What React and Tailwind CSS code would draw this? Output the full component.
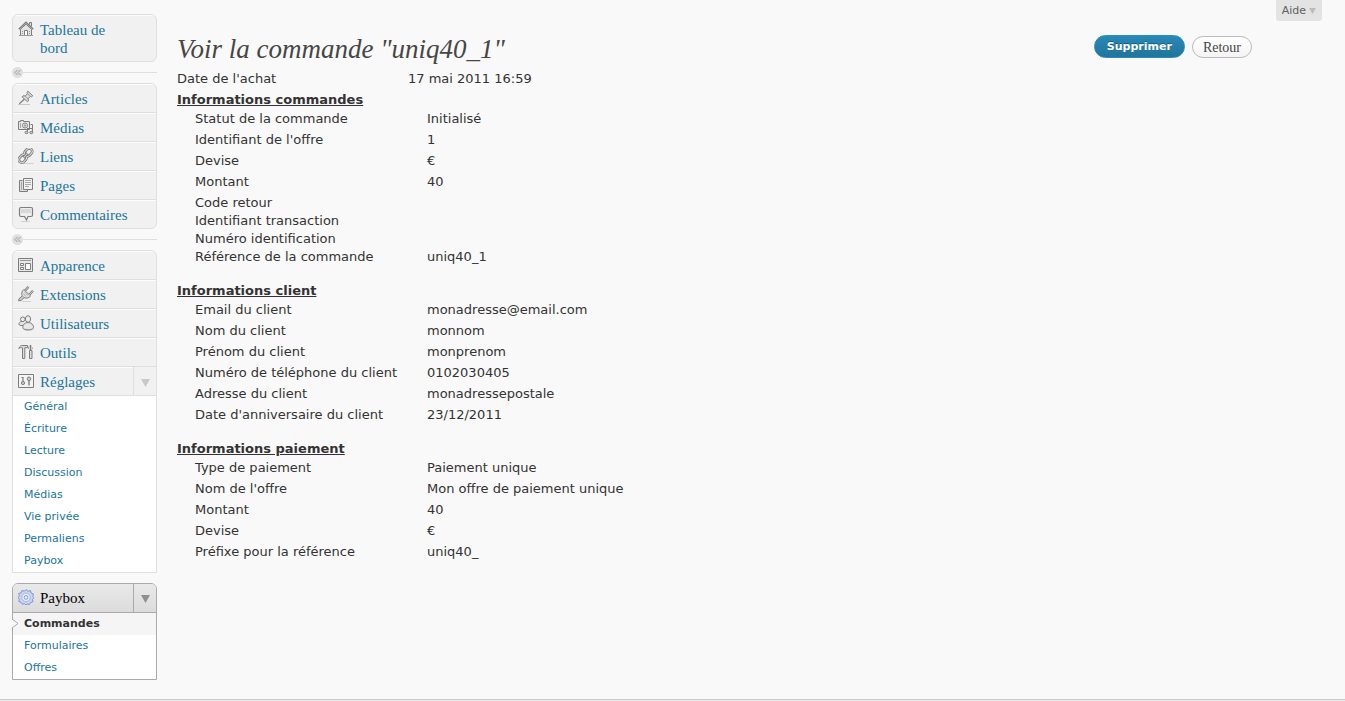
import React from "react";

const serif = "font-['Liberation_Serif',serif]";

function Icon({ children, tone = "text-[#7d7d7d]" }) {
  return (
    <svg
      viewBox="0 0 16 16"
      className={`size-4 shrink-0 ${tone}`}
      fill="none"
      stroke="currentColor"
      strokeWidth="1"
      aria-hidden="true"
    >
      {children}
    </svg>
  );
}

const icons = {
  home: (
    <Icon>
      <path d="M11.5 3.5v-2h2v4" fill="#ddd" />
      <path d="M2.5 8.2v6.3h11V8.2L8 3.2z" fill="#e4e4e4" />
      <path d="M.7 8.3 8 1.2l7.3 7.1" strokeWidth="1.4" />
      <path d="M6.5 14.5v-5h3v5" fill="#fff" />
      <path d="M4 10.5h1M11 10.5h1M4 12.5h1M11 12.5h1M1 14.5h14" stroke="#999" />
    </Icon>
  ),
  pin: (
    <Icon>
      <path d="M9.8 1.2 14.8 5.8l-1.2 1-1.2-.4-2.2 2.2.3 2.2-1.1.9L4 6.800l1-1 2.300.200 2.200-2.300-.5-1.300z" fill="#ddd" />
      <path d="M6.300 9.300 1.300 13.800" strokeWidth="1.200" />
      <path d="M7.200 6.200 10 8.800M9.800 4l2.500 2.300" stroke="#999" />
      <path d="M0 14.500h12" stroke="#c8c8c8" />
    </Icon>
  ),
  media: (
    <Icon>
      <path d="M.5 2.500h2v-1h3v1h6v8H.5z" fill="#e8e8e8" />
      <circle cx="7" cy="6.500" r="2.500" fill="#fff" />
      <circle cx="7" cy="6.500" r=".8" />
      <path d="M2.500 4v5" stroke="#aaa" />
      <path d="M9.500 13.500V9M14.500 13.500V5.500h-2M9.500 9.500h5" />
      <ellipse cx="8.500" cy="13.500" rx="1.500" ry="1.200" fill="#ccc" />
      <ellipse cx="13.300" cy="13.500" rx="1.500" ry="1.200" fill="#ccc" />
    </Icon>
  ),
  link: (
    <Icon>
      <g transform="rotate(-48 7.500 7.500)">
        <rect x="7.500" y="4.500" width="8.500" height="6" rx="3" strokeWidth="2.800" />
        <rect x="-1" y="4.500" width="8.500" height="6" rx="3" strokeWidth="2.800" />
        <rect x="7.500" y="4.500" width="8.500" height="6" rx="3" stroke="#dcdcdc" />
        <rect x="-1" y="4.500" width="8.500" height="6" rx="3" stroke="#dcdcdc" />
        <path d="M4.500 7.500h6" strokeWidth="2.800" />
        <path d="M4.500 7.500h6" stroke="#dcdcdc" />
      </g>
      <path d="M6 15.500h10" stroke="#d2d2d2" />
    </Icon>
  ),
  pages: (
    <Icon>
      <path d="M4.500 3.500h-3v11h8v-2" fill="#ddd" />
      <path d="M5.500 1.500h9v11h-9z" fill="#f2f2f2" />
      <path d="M7 3.500h6M7 5.500h6M7 7.500h6M7 9.500h4" stroke="#aaa" />
      <path d="M3.500 5v8" stroke="#aaa" />
    </Icon>
  ),
  comment: (
    <Icon>
      <path d="M3 1.500h10q1.500 0 1.500 1.500v6q0 1.500-1.500 1.500h-3L8.500 14 6.500 10.500H3Q1.500 10.500 1.500 9V3q0-1.500 1.500-1.500z" fill="#eee" strokeWidth="1.200" />
      <path d="M3 3h10v4H3z" fill="#d8d8d8" stroke="none" />
      <path d="M3 15.500h9" stroke="#d2d2d2" />
    </Icon>
  ),
  theme: (
    <Icon>
      <path d="M.5 1.500h14v13H.5z" fill="#e8e8e8" />
      <path d="M2 3.500h11" stroke="#999" />
      <path d="M2.500 6.500h3v2h-3zM2.500 10.500h3v2h-3zM7.500 6.500h5v6h-5z" fill="#fff" />
    </Icon>
  ),
  plug: (
    <Icon>
      <path d="M5.800 3.500 12.500 10c-1.700 2.200-4.500 2.700-6.700 1.500L4.300 10C3.200 7.800 3.700 5.200 5.800 3.500z" fill="#e2e2e2" />
      <path d="M10.500.8 7 4.800M15 4.800l-3.500 3.700" strokeWidth="2.400" />
      <path d="M10.500.8 7 4.800M15 4.800l-3.500 3.700" stroke="#e4e4e4" strokeWidth=".8" />
      <path d="M6.500 6.200 9.800 9.400M5.500 8l2.800 2.700" stroke="#aaa" />
      <path d="M4 10.200 1 12.800l-.5 2 2.500-.3 3-2.700" fill="#ccc" />
      <path d="M4 15.500h9" stroke="#d2d2d2" />
    </Icon>
  ),
  users: (
    <Icon>
      <path d="M5.500 10.500H3C0 10.500.5 7.500 3 6.500h3" fill="#e4e4e4" />
      <circle cx="4.800" cy="4.300" r="2.300" fill="#eee" />
      <path d="M10 7.500c-3.500 0-5.200 2.500-5.200 4.700s2 2.800 5.400 2.800 5.300-.6 5.300-2.800S13.500 7.500 10 7.500z" fill="#e8e8e8" />
      <ellipse cx="10" cy="4" rx="2.600" ry="3.300" fill="#eee" />
      <path d="M6.500 14c2 .8 5.500.8 7.500 0" stroke="#999" />
    </Icon>
  ),
  tools: (
    <Icon>
      <path d="M.8 4.500C1.500 2 3 1.500 5 1.500h4.500v2.200H6.800v10.800H4.500V3.800C3 3.500 2 3.500.8 4.500z" fill="#ddd" />
      <path d="M12.500 1v5" strokeWidth="1.600" />
      <path d="M11.500 6.500H14v8h-2.500z" fill="#ddd" />
      <path d="M10.500 5V2.500M14.500 5V3.500" stroke="#aaa" />
    </Icon>
  ),
  settings: (
    <Icon>
      <path d="M.5 1.500h15v13H.5z" fill="#f4f4f4" />
      <path d="M5 4v4M3.500 4.500h1" strokeWidth="1.200" />
      <circle cx="5" cy="10" r="1.600" fill="#ccc" />
      <circle cx="11" cy="5.800" r="1.800" fill="#ccc" />
      <path d="M11 8v4.500" strokeWidth="1.400" />
    </Icon>
  ),
  gear: (
    <Icon tone="text-[#7f96cc]">
      <path
        d="M8 .5 10 2.300l2.500-.8.7 2.600 2.300.900-.8 2.400L16 8.500l-1.500 1.900.5 2.300-2.500.8-1 2-2.300-.6L8 16l-1.500-1.400-2.200.7-1.100-2-2.300-.7.4-2.300L.3 8.500l1.100-1.700L.7 4.500l2.400-.700L4 1.500l2.400.7z"
        fill="#cbd6ef"
      />
      <circle cx="8" cy="8.400" r="4.300" fill="#e3eafa" stroke="#a6b8e2" />
      <circle cx="8" cy="8.400" r="1.800" fill="#f3f6fd" stroke="#8097cf" />
    </Icon>
  ),
};

const content = [["pin", "Articles"], ["media", "Médias"], ["link", "Liens"], ["pages", "Pages"], ["comment", "Commentaires"]];
const admin = [["theme", "Apparence"], ["plug", "Extensions"], ["users", "Utilisateurs"], ["tools", "Outils"], ["settings", "Réglages"]];
const settingsLinks = ["Général", "Écriture", "Lecture", "Discussion", "Médias", "Vie privée", "Permaliens", "Paybox"];

const sections = [
  {
    title: "Informations commandes",
    rows: [
      ["Statut de la commande", "Initialisé"],
      ["Identifiant de l'offre", "1"],
      ["Devise", "€"],
      ["Montant", "40"],
      ["Code retour", ""],
      ["Identifiant transaction", ""],
      ["Numéro identification", ""],
      ["Référence de la commande", "uniq40_1"],
    ],
  },
  {
    title: "Informations client",
    rows: [
      ["Email du client", "monadresse@email.com"],
      ["Nom du client", "monnom"],
      ["Prénom du client", "monprenom"],
      ["Numéro de téléphone du client", "0102030405"],
      ["Adresse du client", "monadressepostale"],
      ["Date d'anniversaire du client", "23/12/2011"],
    ],
  },
  {
    title: "Informations paiement",
    rows: [
      ["Type de paiement", "Paiement unique"],
      ["Nom de l'offre", "Mon offre de paiement unique"],
      ["Montant", "40"],
      ["Devise", "€"],
      ["Préfixe pour la référence", "uniq40_"],
    ],
  },
];

function Triangle({ className }) {
  return (
    <svg viewBox="0 0 9 8" className={className} fill="currentColor" aria-hidden="true">
      <path d="M0 0h9L4.500 8z" />
    </svg>
  );
}

function MenuItem({ icon, label, toggle }) {
  return (
    <li className="flex border-t border-[#dfdfdf] first:border-t-0">
      <a
        href="#"
        className={`${serif} flex min-w-0 flex-1 gap-1.5 border-t border-[#fcfcfc] pt-[5px] pb-1 pl-[5px] pr-6 text-[15px] leading-[18px] text-[#21759b]`}
      >
        {icons[icon]}
        <span>{label}</span>
      </a>
      {toggle && (
        <button type="button" aria-label={`Replier ${label}`} className="flex w-[23px] items-center justify-center border-l border-[#dfdfdf] pt-1 text-[#c8c8c8]">
          <Triangle className="h-2 w-[9px]" />
        </button>
      )}
    </li>
  );
}

function Menu({ items }) {
  return (
    <ul className="overflow-hidden rounded-md border border-[#dfdfdf] bg-[#f1f1f1]">
      {items.map(([icon, label]) => (
        <MenuItem key={label} icon={icon} label={label} />
      ))}
    </ul>
  );
}

function Separator() {
  return (
    <div className="flex h-[21px] items-center">
      <button type="button" aria-label="Réduire le menu" className="flex size-[11px] items-center justify-center rounded-full bg-[#dfdfdf] text-[#999]">
        <svg viewBox="0 0 7 7" className="size-[7px]" fill="none" stroke="currentColor" aria-hidden="true">
          <path d="M3.500 1 1 3.500 3.500 6M6.500 1 4 3.500 6.500 6" />
        </svg>
      </button>
      <div className="h-px flex-1 bg-[#dfdfdf]" />
    </div>
  );
}

function Row({ label, value, top }) {
  return (
    <div className={value ? "flex pb-[3px]" : "flex"}>
      <dt className={top ? "w-[231px]" : "w-[232px]"}>{label}</dt>
      <dd>{value}</dd>
    </div>
  );
}

export default function App() {
  return (
    <div className="flex min-h-screen flex-col bg-[#f9f9f9] font-['DejaVu_Sans',Verdana,sans-serif] text-[13px] leading-[18px] text-[#333]">
      <div className="flex flex-1 items-start">
        <nav aria-label="Menu principal" className="ml-3 mt-3.5 w-[145px] shrink-0">
          <Menu items={[["home", "Tableau de bord"]]} />
          <Separator />
          <Menu items={content} />
          <Separator />
          <div className="overflow-hidden rounded-t-md border border-[#dfdfdf] bg-[#f1f1f1]">
            <ul>
              {admin.map(([icon, label]) => (
                <MenuItem key={label} icon={icon} label={label} toggle={label === "Réglages"} />
              ))}
            </ul>
            <ul className="border-t border-[#dfdfdf] bg-white text-[11px] leading-[22px]">
              {settingsLinks.map((label) => (
                <li key={label}>
                  <a href="#" className="block pl-[11px] text-[#21759b]">{label}</a>
                </li>
              ))}
            </ul>
          </div>
          <div className="mt-2.5 rounded-t-md border border-[#aaa] bg-white">
            <div className="flex rounded-t-[5px] border-b border-[#aaa] bg-linear-to-b from-[#e9e9e9] to-[#dcdcdc]">
              <a href="#" className={`${serif} flex flex-1 gap-1.5 py-[5px] pl-[5px] text-[15px] leading-[18px] text-black`}>
                {icons.gear}
                <span>Paybox</span>
              </a>
              <button type="button" aria-label="Replier Paybox" className="flex w-[23px] items-center justify-center border-l border-[#aaa] pt-0.5 text-[#8f8f8f]">
                <Triangle className="h-2 w-[9px]" />
              </button>
            </div>
            <ul className="text-[11px] leading-[22px]">
              <li className="relative bg-[#f5f5f5]">
                <svg viewBox="0 0 7 9" className="absolute -left-px top-1.5 h-[9px] w-[7px]" aria-hidden="true">
                  <path d="M0 0 6 4.500 0 9" fill="#f9f9f9" stroke="#aaa" />
                </svg>
                <a href="#" aria-current="page" className="block pl-[11px] font-bold text-[#333]">Commandes</a>
              </li>
              <li><a href="#" className="block pl-[11px] text-[#21759b]">Formulaires</a></li>
              <li><a href="#" className="block pl-[11px] text-[#21759b]">Offres</a></li>
            </ul>
          </div>
        </nav>

        <main className="min-w-0 flex-1 pl-5">
          <div className="mr-[23px] flex justify-end">
            <button type="button" className="flex h-[21px] items-center gap-[3px] rounded-b-[3px] bg-[#e3e3e3] px-1.5 text-[11px] text-[#606060]">
              Aide
              <Triangle className="h-[6px] w-[7px] text-[#bbb]" />
            </button>
          </div>
          <header className="mr-[93px] flex items-start justify-between pt-3.5">
            <h1 className={`${serif} h-[35px] text-[27px] italic leading-[28px] text-[#464646]`}>Voir la commande "uniq40_1"</h1>
            <div className="flex items-end gap-[7px]">
              <button type="button" className="h-[23px] rounded-full border border-[#298cba] bg-linear-to-b from-[#278ab7] to-[#22749a] px-3 text-[11px] font-bold leading-[13px] text-white [text-shadow:0_-1px_0_rgba(0,0,0,0.3)]">
                Supprimer
              </button>
              <button type="button" className={`${serif} h-[22px] rounded-full border border-[#bbb] bg-linear-to-b from-white to-[#f4f4f4] px-2.5 text-[14px] leading-[13px] text-[#464646]`}>
                Retour
              </button>
            </div>
          </header>
          <dl>
            <Row top label="Date de l'achat" value="17 mai 2011 16:59" />
          </dl>
          {sections.map(({ title, rows }) => (
            <section key={title} className="mb-[13px]">
              <h2 className="h-[19px] font-bold underline">{title}</h2>
              <dl className="pl-[18px]">
                {rows.map(([label, value]) => (
                  <Row key={label} label={label} value={value} />
                ))}
              </dl>
            </section>
          ))}
        </main>
      </div>
      <footer className="mt-[19px] h-0.5 border-t border-[#ccc] bg-[#e8e8e8]" />
    </div>
  );
}
